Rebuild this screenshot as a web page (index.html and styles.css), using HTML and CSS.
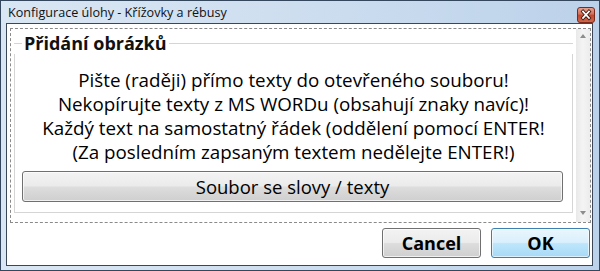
FILE: index.html
```html
<!DOCTYPE html>
<html lang="cs">
<head>
<meta charset="utf-8">
<title>Konfigurace úlohy</title>
<link rel="stylesheet" href="styles.css">
</head>
<body>
<div class="window">
  <div class="titlebar">
    <span class="title">Konfigurace úlohy - Křížovky a rébusy</span>
    <div class="close">
      <svg width="18" height="16" viewBox="0 0 18 16">
        <defs>
          <linearGradient id="cg" x1="0" y1="0" x2="0" y2="1">
            <stop offset="0" stop-color="#e8a493"/>
            <stop offset="0.45" stop-color="#d0705a"/>
            <stop offset="0.5" stop-color="#c2452c"/>
            <stop offset="1" stop-color="#cf6a4f"/>
          </linearGradient>
        </defs>
        <rect x="0.5" y="0.5" width="17" height="15" rx="2.5" fill="url(#cg)" stroke="#7a2a1c"/>
        <path d="M6 4.5 L12 11 M12 4.5 L6 11" stroke="#3a1a14" stroke-width="3.4" stroke-linecap="square"/>
        <path d="M6 4.5 L12 11 M12 4.5 L6 11" stroke="#ffffff" stroke-width="1.8" stroke-linecap="square"/>
      </svg>
    </div>
  </div>
  <div class="client">
    <div class="dashed">
      <div class="scrollpanel">
        <div class="content">
          <div class="group">
            <div class="group-head"><span class="group-title">Přidání obrázků</span></div>
            <div class="group-body">
              <p class="info">Pište (raději) přímo texty do otevřeného souboru!<br>Nekopírujte texty z MS WORDu (obsahují znaky navíc)!<br>Každý text na samostatný řádek (oddělení pomocí ENTER!<br>(Za posledním zapsaným textem nedělejte ENTER!)</p>
              <button class="btn wide">Soubor se slovy / texty</button>
            </div>
          </div>
        </div>
        <div class="scrollbar">
          <span class="arrow up"></span>
          <span class="arrow down"></span>
        </div>
      </div>
    </div>
    <div class="actions">
      <button class="btn action">Cancel</button>
      <button class="btn action default">OK</button>
    </div>
  </div>
</div>
</body>
</html>
```
FILE: styles.css
```css
* { box-sizing: border-box; }
html, body { margin: 0; padding: 0; }
body { width: 600px; height: 271px; overflow: hidden; background: #fff; font-family: "Open Sans", "Noto Sans", sans-serif; }

.window {
  width: 600px;
  height: 271px;
  border: 1px solid #34475c;
  background: linear-gradient(90deg, #d9e6f3 0%, #cfdff0 45%, #bcd2ea 100%);
  padding: 0 6px 4px 5px;
  display: flex;
  flex-direction: column;
}

.titlebar {
  height: 22px;
  display: flex;
  align-items: center;
  justify-content: space-between;
  padding-left: 2px;
}
.title {
  font-family: "Open Sans", sans-serif;
  font-size: 12.6px;
  color: #111;
  margin-top: 1px;
}
.close { width: 18px; height: 16px; margin-top: 6px; margin-right: -2px; }
.close svg { display: block; }

.client {
  flex: 1;
  border: 1px solid #3b4656;
  background: #fff;
  padding: 4px 1px 0 3px;
  display: flex;
  flex-direction: column;
}

.dashed {
  width: 581px;
  height: 195px;
  border: 1px dashed #8a8a8a;
}
.scrollpanel { display: flex; height: 100%; }
.content { flex: 1; padding: 3px 2px 0 3px; }
.scrollbar {
  width: 14px;
  background: linear-gradient(90deg, #e9e9e9, #f4f4f4 50%, #ececec);
  display: flex;
  flex-direction: column;
  justify-content: space-between;
  align-items: center;
  padding: 5px 0 7px;
}
.arrow { width: 0; height: 0; border-left: 3.5px solid transparent; border-right: 3.5px solid transparent; }
.arrow.up { border-bottom: 4px solid #8d8d8d; }
.arrow.down { border-top: 4px solid #8d8d8d; }

.group { width: 559px; }
.group-head {
  display: flex;
  align-items: center;
  height: 22px;
}
.group-head::before {
  content: "";
  width: 8px;
  border-top: 1px solid #d5d5d5;
  align-self: center;
}
.group-head::after {
  content: "";
  flex: 1;
  border-top: 1px solid #d5d5d5;
  align-self: center;
  margin-left: 2px;
}
.group-title {
  font-weight: bold;
  font-size: 18px;
  color: #111;
  padding-left: 2px;
  line-height: 22px;
}
.group-body {
  border: 1px solid #d5d5d5;
  border-top: none;
  height: 159px;
  padding: 14px 6px 0 6px;
}
.info {
  margin: 0;
  text-align: center;
  font-size: 18.8px;
  line-height: 24px;
  color: #000;
  white-space: nowrap;
}

.btn {
  font-family: "Open Sans", sans-serif;
  border: 1px solid #707070;
  border-radius: 3px;
  background: linear-gradient(180deg, #f3f3f3 0%, #ebebeb 48%, #dddddd 52%, #cfcfcf 100%);
  color: #000;
  padding: 0;
  box-shadow: inset 0 0 0 1px rgba(255,255,255,0.7);
}
.wide {
  display: block;
  width: 541px;
  height: 31px;
  margin: 7px 0 0 1px;
  font-size: 18.5px;
  line-height: 29px;
}

.actions {
  display: flex;
  justify-content: flex-end;
  gap: 10px;
  padding: 5px 1px 0 0;
}
.action {
  width: 99px;
  height: 30px;
  font-size: 18px;
  font-weight: bold;
  line-height: 28px;
}
.default {
  border-color: #3c7fb1;
  background: linear-gradient(180deg, #eaf6fd 0%, #d9f0fc 48%, #bee6fd 52%, #a7d9f5 100%);
  box-shadow: inset 0 0 0 1px rgba(255,255,255,0.6);
}
```
